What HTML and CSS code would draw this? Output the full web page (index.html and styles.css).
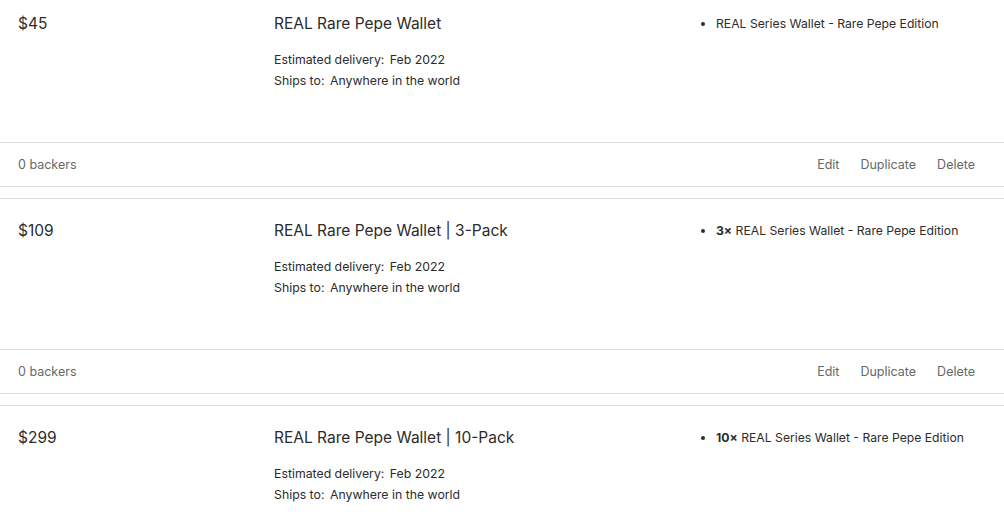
FILE: index.html
```html
<!DOCTYPE html>
<html>
<head>
<meta charset="utf-8">
<link rel="stylesheet" href="styles.css">
</head>
<body>
<div class="rewards">
  <section class="reward">
    <div class="reward-body">
      <div class="price">$45</div>
      <div class="info">
        <h3 class="title">REAL Rare Pepe Wallet</h3>
        <div class="meta"><span class="label">Estimated delivery:</span> Feb 2022</div>
        <div class="meta"><span class="label">Ships to:</span> Anywhere in the world</div>
      </div>
      <ul class="items">
        <li>REAL Series Wallet - Rare Pepe Edition</li>
      </ul>
    </div>
    <div class="reward-footer">
      <span class="backers">0 backers</span>
      <div class="actions"><a>Edit</a><a>Duplicate</a><a>Delete</a></div>
    </div>
  </section>
  <section class="reward">
    <div class="reward-body">
      <div class="price">$109</div>
      <div class="info">
        <h3 class="title">REAL Rare Pepe Wallet | 3-Pack</h3>
        <div class="meta"><span class="label">Estimated delivery:</span> Feb 2022</div>
        <div class="meta"><span class="label">Ships to:</span> Anywhere in the world</div>
      </div>
      <ul class="items">
        <li><b>3×</b> REAL Series Wallet - Rare Pepe Edition</li>
      </ul>
    </div>
    <div class="reward-footer">
      <span class="backers">0 backers</span>
      <div class="actions"><a>Edit</a><a>Duplicate</a><a>Delete</a></div>
    </div>
  </section>
  <section class="reward">
    <div class="reward-body">
      <div class="price">$299</div>
      <div class="info">
        <h3 class="title">REAL Rare Pepe Wallet | 10-Pack</h3>
        <div class="meta"><span class="label">Estimated delivery:</span> Feb 2022</div>
        <div class="meta"><span class="label">Ships to:</span> Anywhere in the world</div>
      </div>
      <ul class="items">
        <li><b>10×</b> REAL Series Wallet - Rare Pepe Edition</li>
      </ul>
    </div>
    <div class="reward-footer">
      <span class="backers">0 backers</span>
      <div class="actions"><a>Edit</a><a>Duplicate</a><a>Delete</a></div>
    </div>
  </section>
</div>
</body>
</html>
```
FILE: styles.css
```css
* { box-sizing: border-box; }
html, body { margin: 0; padding: 0; background: #fff; }
body {
  font-family: Inter, "Liberation Sans", sans-serif;
  color: #2c2c2c;
  overflow: hidden;
}
.rewards { margin-top: -9px; }
.reward {
  border-top: 1px solid #dcdedd;
  border-bottom: 1px solid #dcdedd;
  margin-bottom: 11px;
}
.reward-body {
  display: grid;
  grid-template-columns: 256px 426px 1fr;
  padding: 20px 29px 51px 18px;
}
.price {
  font-size: 15.5px;
  line-height: 24px;
}
.title {
  margin: 0 0 13px;
  font-weight: 400;
  font-size: 15.5px;
  line-height: 24px;
}
.meta {
  font-size: 12.3px;
  line-height: 21px;
}
.label { margin-right: 2px; }
.items {
  margin: 0;
  padding: 0 0 0 16px;
  font-size: 12.2px;
  line-height: 24px;
}
.items b { font-weight: 700; }
.reward-footer {
  border-top: 1px solid #dcdedd;
  height: 44px;
  display: flex;
  align-items: center;
  justify-content: space-between;
  padding: 0 29px 0 18px;
  font-size: 12.5px;
  color: #656969;
}
.actions { display: flex; gap: 21px; }
```
